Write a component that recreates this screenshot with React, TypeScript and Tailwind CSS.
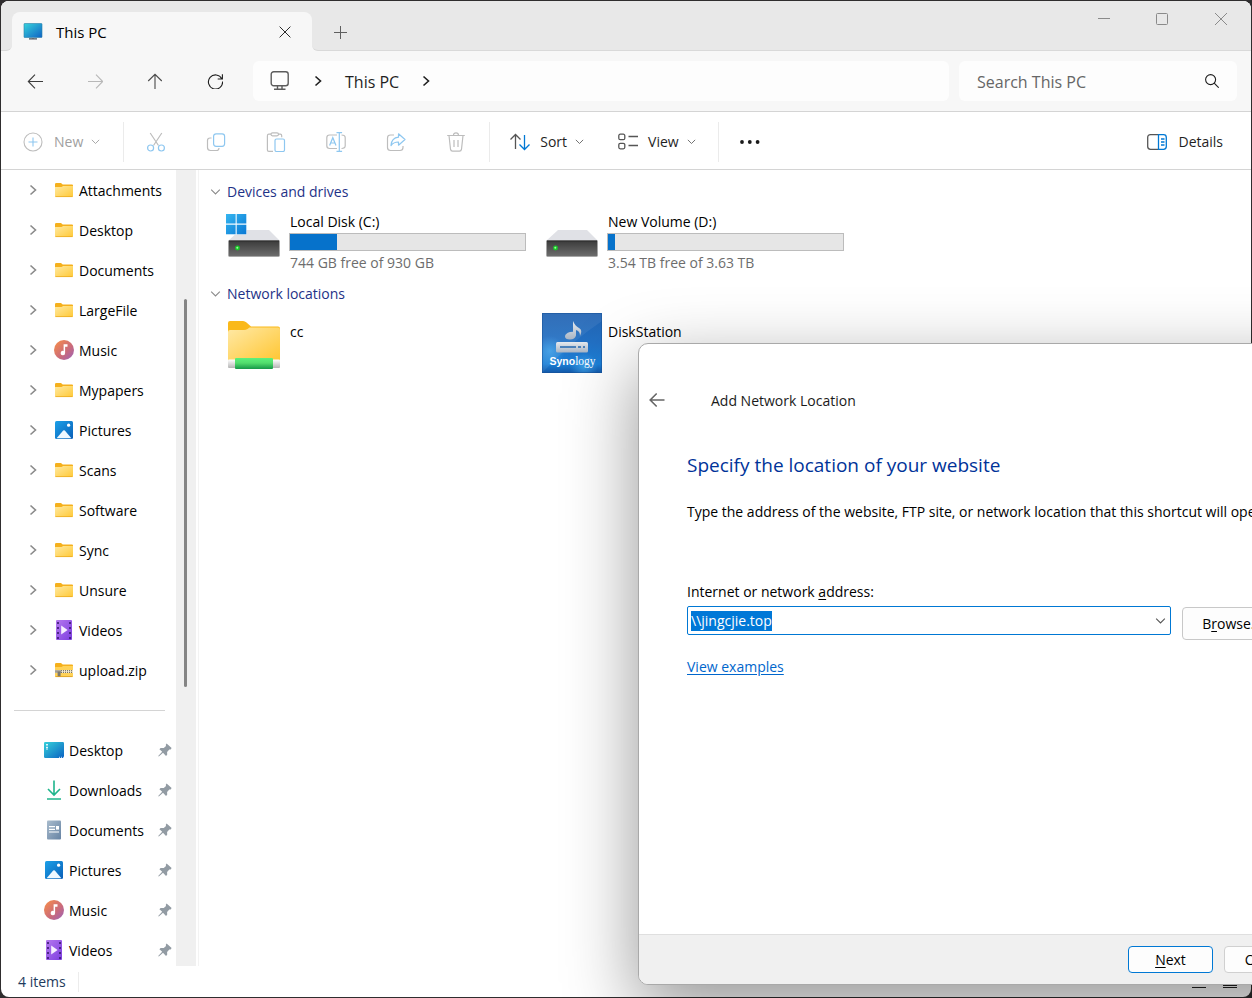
import React, { useEffect, useRef } from "react";

const ChevronDown = ({ className = "" }: { className?: string }) => (
  <svg className={className} viewBox="0 0 12 12" fill="none" stroke="currentColor">
    <path d="M2 4.2l4 4 4-4" />
  </svg>
);

const ChevronRight = ({ className = "" }: { className?: string }) => (
  <svg className={className} viewBox="0 0 16 16" fill="none" stroke="currentColor" strokeWidth="1.6">
    <path d="M5.5 3.5L10.5 8l-5 4.5" />
  </svg>
);

const Monitor = () => (
  <svg className="size-5" viewBox="0 0 20 20">
    <defs>
      <linearGradient id="monitor" x1="0" y1="0" x2="1" y2="1">
        <stop offset="0" stopColor="#36d3dc" />
        <stop offset="1" stopColor="#0f62c4" />
      </linearGradient>
    </defs>
    <rect x="1" y="1.5" width="18" height="14" rx="0.6" fill="url(#monitor)" stroke="#2a7fa8" strokeWidth="0.6" />
    <path d="M9 15.8h2v1H9z" fill="#8f9aa5" />
    <path d="M6 16.800h8" stroke="#4a535c" strokeWidth="1.2" />
  </svg>
);

const Folder = () => (
  <svg className="size-5" viewBox="0 0 20 20">
    <defs>
      <linearGradient id="folder" x1="0" y1="0" x2="1" y2="1">
        <stop offset="0" stopColor="#ffe9a0" />
        <stop offset="1" stopColor="#ffc937" />
      </linearGradient>
    </defs>
    <path d="M1 4.2Q1 3 2.2 3H7l1.7 1.6H18q1 0 1 1V9H1z" fill="#f5b01c" />
    <path d="M1 7h6.5l1.6-1H19v10q0 1-1 1H2q-1 0-1-1z" fill="url(#folder)" />
    <path d="M1.4 16.6h17.2" stroke="#eba91f" strokeWidth="0.8" />
  </svg>
);

const Zip = () => (
  <svg className="size-5" viewBox="0 0 20 20">
    <path d="M1 4.2Q1 3 2.2 3H7l1.7 1.6H18q1 0 1 1V9H1z" fill="#f5b01c" />
    <path d="M1 7h6.5l1.6-1H19v10q0 1-1 1H2q-1 0-1-1z" fill="#ffd257" />
    <path d="M1 10h18v3H1z" fill="#f0e6cc" />
    <path d="M7 10.7h12M7 12.4h12" stroke="#6b6658" strokeDasharray="1 1" />
    <path d="M1 10.2h6v2.6H1z" fill="#a49e91" />
    <path d="M3.6 11.5h3v5.2h-3z" fill="#7d7970" />
    <path d="M1.4 16.6h17.2" stroke="#d99a1a" strokeWidth="0.8" />
  </svg>
);

const Music = () => (
  <svg className="size-5" viewBox="0 0 20 20">
    <defs>
      <linearGradient id="music" x1="0" y1="0" x2="1" y2="1">
        <stop offset="0.1" stopColor="#f2894f" />
        <stop offset="0.6" stopColor="#c96a7c" />
        <stop offset="1" stopColor="#9a62bd" />
      </linearGradient>
    </defs>
    <circle cx="10" cy="10" r="10" fill="url(#music)" />
    <path d="M9.6 4.3h3.9v2.5h-2.4v6.1a2.2 2.2 0 1 1-1.5-2z" fill="#fff" />
  </svg>
);

const Pictures = () => (
  <svg className="size-5" viewBox="0 0 20 20">
    <defs>
      <linearGradient id="pictures" x1="0" y1="0" x2="1" y2="1">
        <stop offset="0" stopColor="#1ba0e8" />
        <stop offset="1" stopColor="#0a5fb8" />
      </linearGradient>
    </defs>
    <rect x="1" y="1" width="18" height="18" rx="1.5" fill="url(#pictures)" />
    <path d="M2.6 18.2l6.6-7.6q.8-.8 1.6 0l6.6 7.6z" fill="#eef7ff" />
    <circle cx="14.6" cy="5.2" r="1.6" fill="#fff" />
  </svg>
);

const Videos = () => (
  <svg className="size-5" viewBox="0 0 20 20">
    <defs>
      <linearGradient id="videos" x1="0" y1="0" x2="1" y2="1">
        <stop offset="0" stopColor="#b578ee" />
        <stop offset="1" stopColor="#7d3ee0" />
      </linearGradient>
    </defs>
    <rect x="2" y="0" width="16" height="20" rx="1" fill="url(#videos)" />
    <path d="M4 2v17M16 2v17" stroke="#43207c" strokeWidth="1.8" strokeDasharray="2 3" />
    <path d="M7.2 5.6l6.4 4.4-6.4 4.4z" fill="#f6eeff" />
  </svg>
);

const DesktopIcon = () => (
  <svg className="size-5" viewBox="0 0 20 20">
    <defs>
      <linearGradient id="desktop" x1="0" y1="0" x2="1" y2="1">
        <stop offset="0" stopColor="#35d0da" />
        <stop offset="1" stopColor="#0a62c2" />
      </linearGradient>
    </defs>
    <rect x="0" y="2" width="20" height="16" rx="1.2" fill="url(#desktop)" />
    <path d="M3 4v6" stroke="#fff" strokeWidth="1.7" strokeDasharray="1.6 1.2" />
    <path d="M15 17.3h5" stroke="#d9ecff" strokeWidth="1" strokeDasharray="1 1" />
  </svg>
);

const Downloads = () => (
  <svg className="size-5" viewBox="0 0 20 20" fill="none" stroke="#1fb58c" strokeWidth="1.6">
    <path d="M10 .5v14M4 9l6 6 6-6M3 19h14" />
  </svg>
);

const Documents = () => (
  <svg className="size-5" viewBox="0 0 20 20">
    <defs>
      <linearGradient id="documents" x1="0" y1="0" x2="1" y2="1">
        <stop offset="0" stopColor="#a9bccd" />
        <stop offset="1" stopColor="#6683a3" />
      </linearGradient>
    </defs>
    <rect x="3" y="0.5" width="14" height="19" rx="1" fill="url(#documents)" />
    <path d="M5 6.7h6M5 9.3h6M5 12h10" stroke="#fff" strokeWidth="1.2" />
    <path d="M12 6h3v3.6h-3z" fill="#fff" />
  </svg>
);

const Pin = () => (
  <svg className="size-4 text-[#929ba3]" viewBox="0 0 16 16" fill="currentColor">
    <path d="M9.6 1.600l5 4.400-.9 1.400-1.400.1-2.200 2.400.1 2.900-1.200 1.200-3-3.200-4.200 3.800-.6-.6 4-4.200L2.400 7.200l1.200-1.300 3.200.1 2.200-2-.2-1.300z" />
  </svg>
);

const DriveShape = () => (
  <>
    <defs>
      <linearGradient id="drive" x1="0" y1="0" x2="0" y2="1">
        <stop offset="0" stopColor="#3a3a3a" />
        <stop offset="1" stopColor="#6e6e6e" />
      </linearGradient>
    </defs>
    <path d="M4 30l12-11h29l11 11z" fill="#e0e1e6" />
    <rect x="4.5" y="29.5" width="51" height="16" rx="1" fill="url(#drive)" stroke="#a5a5a5" strokeWidth="0.9" />
    <path d="M5 30h50" stroke="#2c2c2c" />
    <circle cx="13.5" cy="37" r="2.4" fill="#18c828" />
    <circle cx="13.3" cy="36.7" r="1" fill="#9dff9a" />
  </>
);

const LocalDisk = () => (
  <svg className="size-[60px] shrink-0" viewBox="0 0 60 60">
    <DriveShape />
    <defs>
      <linearGradient id="win" x1="0" y1="0" x2="1" y2="1">
        <stop offset="0" stopColor="#35b6f0" />
        <stop offset="1" stopColor="#0a78d4" />
      </linearGradient>
    </defs>
    <path d="M2 3h20.500v20.500H2z" fill="#f4fbff" />
    <path d="M2 3h9.600v9.600H2zM12.700 3h9.600v9.600h-9.600zM2 13.700h9.600v9.600H2zM12.700 13.700h9.600v9.600h-9.600z" fill="url(#win)" />
  </svg>
);

const Drive = () => (
  <svg className="size-[60px] shrink-0" viewBox="0 0 60 60">
    <DriveShape />
  </svg>
);

const NetworkFolder = () => (
  <svg className="size-[60px] shrink-0" viewBox="0 0 60 60">
    <defs>
      <linearGradient id="netfolder" x1="0" y1="0" x2="1" y2="1">
        <stop offset="0" stopColor="#ffe9a6" />
        <stop offset="1" stopColor="#ffc632" />
      </linearGradient>
      <linearGradient id="pipe" x1="0" y1="0" x2="0" y2="1">
        <stop offset="0" stopColor="#5cf07c" />
        <stop offset="0.45" stopColor="#52dd6d" />
        <stop offset="1" stopColor="#159848" />
      </linearGradient>
      <linearGradient id="pipeEnd" x1="0" y1="0" x2="0" y2="1">
        <stop offset="0" stopColor="#ffffff" />
        <stop offset="1" stopColor="#b5b5b5" />
      </linearGradient>
    </defs>
    <path d="M4 10q0-2 2-2h13q2 0 3.500 1.500L27 13.500h27q2 0 2 2V24H4z" fill="#fab91a" />
    <path d="M4 19q0-2 2-2h14q2 0 3.500-1l2-1.500H54q2 0 2 2V48H4z" fill="url(#netfolder)" />
    <rect x="4" y="46.500" width="52" height="8.500" rx="1" fill="url(#pipeEnd)" />
    <rect x="11" y="45" width="38" height="11" rx="1" fill="url(#pipe)" />
  </svg>
);

const Synology = () => (
  <svg className="size-[60px] shrink-0" viewBox="0 0 60 60">
    <defs>
      <linearGradient id="syno" x1="0" y1="0" x2="0" y2="1">
        <stop offset="0" stopColor="#2364b2" />
        <stop offset="0.5" stopColor="#2270c4" />
        <stop offset="0.85" stopColor="#1b7fd6" />
        <stop offset="1" stopColor="#1458a8" />
      </linearGradient>
      <radialGradient id="synoGlow">
        <stop offset="0" stopColor="#4bb4f5" stopOpacity="0.6" />
        <stop offset="1" stopColor="#4bb4f5" stopOpacity="0" />
      </radialGradient>
      <linearGradient id="silver" x1="0" y1="0" x2="0" y2="1">
        <stop offset="0" stopColor="#e6eaef" />
        <stop offset="1" stopColor="#a9b5c4" />
      </linearGradient>
    </defs>
    <rect width="60" height="60" fill="url(#syno)" />
    <circle cx="8" cy="38" r="15" fill="url(#synoGlow)" />
    <circle cx="42" cy="54" r="14" fill="url(#synoGlow)" />
    <path d="M60 0v8Q30 28 0 60V0z" fill="#fff" opacity="0.07" />
    <path d="M31 8q2 5 6 7t1 8q0-5-4-6v5.500q-1 4-6 4t-5-3 5-4.500l3-.3z" fill="url(#silver)" />
    <rect x="14" y="29" width="32" height="10.500" rx="1.500" fill="url(#silver)" />
    <path d="M18 34h16M36 34h3M41 34h2" stroke="#2368b0" strokeWidth="1.600" />
    <text x="7.500" y="52" fill="#fff" fontSize="10.500" fontWeight="700" fontFamily="Liberation Sans, sans-serif">
      Syno
      <tspan fontSize="11.500" fontWeight="400" fontFamily="Liberation Serif, serif">logy</tspan>
    </text>
    <rect x="0.500" y="0.500" width="59" height="59" fill="none" stroke="#164f96" opacity="0.5" />
  </svg>
);

const folders = [
  { name: "Attachments", icon: <Folder /> },
  { name: "Desktop", icon: <Folder /> },
  { name: "Documents", icon: <Folder /> },
  { name: "LargeFile", icon: <Folder /> },
  { name: "Music", icon: <Music /> },
  { name: "Mypapers", icon: <Folder /> },
  { name: "Pictures", icon: <Pictures /> },
  { name: "Scans", icon: <Folder /> },
  { name: "Software", icon: <Folder /> },
  { name: "Sync", icon: <Folder /> },
  { name: "Unsure", icon: <Folder /> },
  { name: "Videos", icon: <Videos /> },
  { name: "upload.zip", icon: <Zip /> },
];

const pinned = [
  { name: "Desktop", icon: <DesktopIcon /> },
  { name: "Downloads", icon: <Downloads /> },
  { name: "Documents", icon: <Documents /> },
  { name: "Pictures", icon: <Pictures /> },
  { name: "Music", icon: <Music /> },
  { name: "Videos", icon: <Videos /> },
];

const drives = [
  { name: "Local Disk (C:)", free: "744 GB free of 930 GB", used: 20, icon: <LocalDisk /> },
  { name: "New Volume (D:)", free: "3.54 TB free of 3.63 TB", used: 3, icon: <Drive /> },
];

const locations = [
  { name: "cc", icon: <NetworkFolder /> },
  { name: "DiskStation", icon: <Synology /> },
];

function TitleBar() {
  return (
    <div className="flex h-[50px] shrink-0 bg-[#f7f7f7]">
      <div className="w-[11px] rounded-br-md border-b border-[#d9d9d9] bg-[#e8e8e8]" />
      <div className="flex w-[300px] items-end bg-[#e8e8e8]">
        <div className="flex h-[39px] w-full items-center rounded-t-lg bg-[#f7f7f7] pr-4 pl-[11px]">
          <Monitor />
          <span className="ml-[13px] flex-1 text-[15px] font-medium">This PC</span>
          <button aria-label="Close tab" className="flex size-[22px] items-center justify-center">
            <svg className="size-3" viewBox="0 0 12 12" stroke="#2b2b2b" strokeWidth="1">
              <path d="M.6.6l10.800 10.800M11.400.6L.6 11.400" />
            </svg>
          </button>
        </div>
      </div>
      <div className="flex flex-1 justify-between rounded-bl-md border-b border-[#d9d9d9] bg-[#e8e8e8] text-[#8a8a8a]">
        <button aria-label="New tab" className="mt-5 ml-[17px] flex size-[22px] items-center justify-center">
          <svg className="size-[14px] text-[#5f5f5f]" viewBox="0 0 14 14" stroke="currentColor">
            <path d="M7.500 1v13M1 7.500h13" />
          </svg>
        </button>
        <div className="flex h-9">
          <button aria-label="Minimize" className="flex w-[58px] items-center justify-center">
            <svg className="size-3" viewBox="0 0 12 12" stroke="currentColor">
              <path d="M0 5.500h12" />
            </svg>
          </button>
          <button aria-label="Maximize" className="flex w-[58px] items-center justify-center">
            <svg className="size-3" viewBox="0 0 12 12" fill="none" stroke="currentColor">
              <rect x="0.500" y="0.500" width="11" height="11" rx="1" />
            </svg>
          </button>
          <button aria-label="Close" className="flex w-[60px] items-center justify-center">
            <svg className="size-3" viewBox="0 0 12 12" stroke="currentColor">
              <path d="M0 0l12 12M12 0L0 12" />
            </svg>
          </button>
        </div>
      </div>
    </div>
  );
}

function NavBar() {
  return (
    <div className="flex h-[61px] shrink-0 items-center border-b border-[#d4d4d4] bg-[#f7f7f7] pr-[14px] pl-1 text-[#1f1f1f]">
      <button aria-label="Back" className="flex h-10 w-[60px] items-center justify-center">
        <svg className="size-4" viewBox="0 0 16 16" fill="none" stroke="#3c3c3c" strokeWidth="1.1">
          <path d="M16 8.500H1.500M8 1.700L1.300 8.500l6.700 6.800" />
        </svg>
      </button>
      <button aria-label="Forward" className="flex h-10 w-[60px] items-center justify-center">
        <svg className="size-4" viewBox="0 0 16 16" fill="none" stroke="#b8b8b8" strokeWidth="1.1">
          <path d="M1 8.500H15.500M9 1.700L15.700 8.500l-6.700 6.800" />
        </svg>
      </button>
      <button aria-label="Up" className="flex h-10 w-[60px] items-center justify-center">
        <svg className="size-4" viewBox="0 0 16 16" fill="none" stroke="#4a4a4a" strokeWidth="1.1">
          <path d="M8 16V1.500M1.200 8L8 1.300l6.800 6.700" />
        </svg>
      </button>
      <button aria-label="Refresh" className="flex h-10 w-[60px] items-center justify-center">
        <svg className="size-4" viewBox="0 0 16 16" fill="none" stroke="#1f1f1f" strokeWidth="1.1">
          <path d="M14.800 5.700A7.100 7.100 0 1 0 15.600 8.500M15.400 1.300v4.700h-4.700" />
        </svg>
      </button>
      <div className="ml-2 flex h-10 flex-1 items-center rounded-md bg-[#fdfdfd] text-base">
        <svg className="ml-[17px] size-5" viewBox="0 0 20 20" fill="none" stroke="#5c5c5c" strokeWidth="1.4">
          <rect x="1.200" y="0.700" width="17" height="14" rx="2.500" />
          <path d="M7.500 15v3M12 15v3M4 18.200h11.500" />
        </svg>
        <ChevronRight className="mr-[19px] ml-5 size-4" />
        <button className="pt-[2px]">This PC</button>
        <ChevronRight className="ml-[19px] size-4" />
      </div>
      <div className="ml-[10px] flex h-10 w-[278px] items-center rounded-md bg-[#fdfdfd] pr-[18px] pl-[18px]">
        <input aria-label="Search This PC" placeholder="Search This PC" className="min-w-0 flex-1 pt-[2px] text-base outline-none placeholder:text-[#666]" />
        <svg className="size-[14px]" viewBox="0 0 14 14" fill="none" stroke="#1f1f1f" strokeWidth="1.1">
          <circle cx="5.600" cy="5.600" r="5" />
          <path d="M9.200 9.200l4.500 4.500" />
        </svg>
      </div>
    </div>
  );
}

function Toolbar() {
  return (
    <div className="flex h-[58px] shrink-0 items-center border-b border-[#d4d4d4] bg-white pt-[2px] text-[#1f1f1f]">
      <button disabled className="flex items-center pr-[22px] pl-[22px] text-[#a0a0a0]">
        <svg className="size-5" viewBox="0 0 20 20" fill="none">
          <circle cx="10" cy="10" r="9" stroke="#bdbdbd" strokeWidth="1.1" />
          <path d="M10 5.500v9M5.500 10h9" stroke="#8ec7f0" strokeWidth="1.1" />
        </svg>
        <span className="ml-[11px]">New</span>
        <ChevronDown className="ml-[7px] size-[11px]" />
      </button>
      <div className="mr-[2px] h-10 w-px bg-[#ebebeb]" />
      <button disabled aria-label="Cut" className="flex w-[60px] justify-center">
        <svg className="size-5" viewBox="0 0 20 20" fill="none" strokeWidth="1.2">
          <path d="M4.200 1l8.300 12.500M15.800 1L7.500 13.500" stroke="#bdbdbd" />
          <circle cx="4.600" cy="16" r="3" stroke="#8ec7f0" />
          <circle cx="15.400" cy="16" r="3" stroke="#8ec7f0" />
        </svg>
      </button>
      <button disabled aria-label="Copy" className="flex w-[60px] justify-center">
        <svg className="size-5" viewBox="0 0 20 20" fill="none" strokeWidth="1.2">
          <path d="M5.500 6H4Q1.500 6 1.500 8.500v7Q1.500 18.500 4.500 18.500h6Q13 18.500 13 16" stroke="#bdbdbd" />
          <rect x="7.600" y="1.800" width="11" height="12.500" rx="2.500" stroke="#8ec7f0" />
        </svg>
      </button>
      <button disabled aria-label="Paste" className="flex w-[60px] justify-center">
        <svg className="size-5" viewBox="0 0 20 20" fill="none" strokeWidth="1.2">
          <path d="M5 2.200H2.800Q1.400 2.200 1.400 3.700v14.300Q1.400 19.400 2.800 19.400H7M12.500 2.200h1.800q1.400 0 1.400 1.500v1.500" stroke="#bdbdbd" />
          <rect x="5" y="0.800" width="7.500" height="3" rx="1.500" stroke="#bdbdbd" />
          <rect x="9" y="7" width="9.500" height="12.500" rx="1.500" stroke="#8ec7f0" />
        </svg>
      </button>
      <button disabled aria-label="Rename" className="flex w-[60px] justify-center">
        <svg className="size-5" viewBox="0 0 20 20" fill="none" strokeWidth="1.200">
          <path d="M11 3H3.500Q.8 3 .8 5.700v8.100q0 2.700 2.700 2.700H11M15.500 3q3.700 0 3.700 2.700v8.100q0 2.700-3.700 2.700" stroke="#bdbdbd" />
          <path d="M13.300.7v18.600M10.500.7h5.600M10.500 19.300h5.600M3.600 13.500L6.800 5.700 10 13.500M4.700 11h4.200" stroke="#8ec7f0" />
        </svg>
      </button>
      <button disabled aria-label="Share" className="flex w-[60px] justify-center">
        <svg className="size-5" viewBox="0 0 20 20" fill="none" strokeWidth="1.200" strokeLinejoin="round">
          <path d="M8 3H4.500Q1.500 3 1.500 6v9.500q0 3 3 3H14q3 0 3-3V14" stroke="#bdbdbd" />
          <path d="M12.500 1.800l6.500 5.700-6.500 5.700V10Q8 9.800 5 13.500 5.500 6 12.500 5.200z" stroke="#8ec7f0" />
        </svg>
      </button>
      <button disabled aria-label="Delete" className="flex w-[60px] justify-center">
        <svg className="size-5" viewBox="0 0 20 20" fill="none" stroke="#bdbdbd" strokeWidth="1.200">
          <path d="M1.200 3.500h17.600M7.500 3.200Q7.500.9 10 .9t2.500 2.300M3 3.500l1.500 13.700q.3 2 2 2h7q1.700 0 2-2L17 3.500M8 8v7M12 8v7" />
        </svg>
      </button>
      <div className="ml-[3px] h-10 w-px bg-[#ebebeb]" />
      <button className="ml-5 flex items-center">
        <svg className="size-5" viewBox="0 0 20 20" fill="none" strokeWidth="1.300">
          <path d="M5.500 17V2.500M.5 7.500l5-5 5 5" stroke="#555" />
          <path d="M14.500 3v14.500M9.500 12.500l5 5 5-5" stroke="#0078d4" />
        </svg>
        <span className="ml-[10px]">Sort</span>
        <ChevronDown className="ml-[7px] size-[11px] text-[#666]" />
      </button>
      <button className="ml-[33px] flex items-center">
        <svg className="size-5" viewBox="0 0 20 20" fill="none" stroke="#555" strokeWidth="1.300">
          <rect x="0.800" y="2.200" width="6" height="5.500" rx="1.500" />
          <rect x="0.800" y="11.300" width="6" height="5.500" rx="1.500" />
          <path d="M10.500 4.500H20M10.500 13.500H20" />
        </svg>
        <span className="ml-[10px]">View</span>
        <ChevronDown className="ml-[7px] size-[11px] text-[#666]" />
      </button>
      <div className="ml-[21px] h-10 w-px bg-[#ebebeb]" />
      <button aria-label="See more" className="ml-5">
        <svg className="h-5 w-[22px]" viewBox="0 0 22 20" fill="#1a1a1a">
          <circle cx="3" cy="10" r="1.900" />
          <circle cx="10.800" cy="10" r="1.900" />
          <circle cx="18.600" cy="10" r="1.900" />
        </svg>
      </button>
      <button className="mr-7 ml-auto flex items-center">
        <svg className="size-5" viewBox="0 0 20 20" fill="none" strokeWidth="1.300">
          <path d="M12 2.700H3.500Q.7 2.700.7 5.500v9q0 2.800 2.800 2.800H12" stroke="#555" />
          <path d="M11.500 2.700h5q2.800 0 2.800 2.800v9q0 2.800-2.800 2.800h-5z" stroke="#0078d4" />
          <path d="M14 7h3.500M14 10h3.500M14 13h3.500" stroke="#0078d4" />
        </svg>
        <span className="ml-[11px]">Details</span>
      </button>
    </div>
  );
}

function Sidebar() {
  return (
    <nav className="flex w-[198px] shrink-0 overflow-hidden border-r border-[#f3f3f3]">
      <div className="w-[175px]">
        <ul>
          {folders.map((item) => (
            <li key={item.name} className="flex h-10 items-center pl-6">
              <button aria-label={`Expand ${item.name}`}>
                <ChevronRight className="size-4 text-[#8a8a8a]" />
              </button>
              <a href="#" className="ml-[13px] flex items-center gap-[5px]">
                {item.icon}
                <span className="pt-[2px]">{item.name}</span>
              </a>
            </li>
          ))}
        </ul>
        <hr className="my-5 mr-[11px] ml-[13px] border-[#d4d4d4]" />
        <ul className="-mt-px">
          {pinned.map((item) => (
            <li key={item.name} className="flex h-10 items-center justify-between pr-[3px] pl-[43px]">
              <a href="#" className="flex items-center gap-[5px]">
                {item.icon}
                <span className="pt-[2px]">{item.name}</span>
              </a>
              <Pin />
            </li>
          ))}
        </ul>
      </div>
      <div className="flex w-5 justify-center bg-[#f0f0f0] pt-[129px] pr-px">
        <div className="h-[388px] w-[3px] rounded-full bg-[#858585]" />
      </div>
    </nav>
  );
}

function GroupTitle({ children }: { children: React.ReactNode }) {
  return (
    <h2 className="flex h-[41px] items-center gap-[5px] pt-[2px] pl-[10px] text-[#1e3287]">
      <ChevronDown className="size-[13px] text-[#8a8a8a]" />
      {children}
    </h2>
  );
}

function Content() {
  return (
    <main className="flex flex-1 flex-col gap-px">
      <section>
        <GroupTitle>Devices and drives</GroupTitle>
        <div className="flex pl-[25px]">
          {drives.map((drive) => (
            <div key={drive.name} className="flex h-[60px] w-[318px] gap-[5px]">
              {drive.icon}
              <div className="w-[237px] pt-px">
                <p className="pl-px">{drive.name}</p>
                <div className="mt-px h-[18px] border border-[#bcbcbc] bg-[#e6e6e6]">
                  <div className="h-full bg-[#0672cb]" style={{ width: `${drive.used}%` }} />
                </div>
                <p className="mt-[2px] pl-px text-[#6d6d6d]">{drive.free}</p>
              </div>
            </div>
          ))}
        </div>
      </section>
      <section>
        <GroupTitle>Network locations</GroupTitle>
        <div className="flex pl-[25px]">
          {locations.map((location) => (
            <div key={location.name} className="flex w-[318px] gap-[6px]">
              {location.icon}
              <p className="pt-[9px]">{location.name}</p>
            </div>
          ))}
        </div>
      </section>
    </main>
  );
}

function StatusBar() {
  return (
    <footer className="flex h-[31px] shrink-0 items-center pr-[14px] pl-[17px] text-[#1e3a5c]">
      <span className="border-r border-[#ececec] pr-3">4 items</span>
      <div className="ml-auto flex gap-[17px]">
        <button aria-label="Details view">
          <svg className="h-[15px] w-[14px]" viewBox="0 0 14 15" stroke="#222">
            <path d="M0 1.500h14M0 5.500h14M0 9.500h14M0 13.500h14" />
          </svg>
        </button>
        <button aria-label="Large icons view">
          <svg className="h-[15px] w-[14px]" viewBox="0 0 14 15" fill="none" stroke="#222">
            <path d="M.5 1.500h13v10H.5zM0 11.500h14M0 13.500h14" />
          </svg>
        </button>
      </div>
    </footer>
  );
}

function NetworkDialog() {
  const address = useRef<HTMLInputElement>(null);

  useEffect(() => {
    address.current?.focus();
    address.current?.select();
  }, []);

  return (
    <div
      role="dialog"
      aria-label="Add Network Location"
      className="absolute top-[343px] left-[638px] flex h-[642px] w-[780px] flex-col overflow-hidden rounded-[10px] border border-[#a9a9a9] bg-white text-black shadow-[0_24px_72px_rgba(0,0,0,0.42)]"
    >
      <div className="flex-1 pt-11">
        <div className="flex h-6 items-center pl-[10px] text-[#1a1a1a]">
          <button aria-label="Back">
            <svg className="size-4" viewBox="0 0 16 16" fill="none" stroke="#666" strokeWidth="1.600">
              <path d="M15.500 8H1.200M7.700 1.500L1.200 8l6.500 6.500" />
            </svg>
          </button>
          <span className="ml-[46px] pt-[2px]">Add Network Location</span>
        </div>
        <div className="px-12">
          <h1 className="mt-10 text-[19px] leading-[26px] text-[#003399]">Specify the location of your website</h1>
          <p className="mt-6 whitespace-nowrap">
            Type the address of the website, FTP site, or network location that this shortcut will open:
          </p>
          <label htmlFor="address" className="mt-15 block">
            Internet or network <u className="underline-offset-2">a</u>ddress:
          </label>
          <div className="mt-1 flex items-start gap-[11px]">
            <div className="flex h-[29px] w-[484px] items-center rounded-[2px] border border-[#0078d4] pr-[3px] pl-[3px]">
              <input
                id="address"
                ref={address}
                defaultValue="\\jingcjie.top"
                className="h-5 min-w-0 flex-1 outline-none selection:bg-[#0078d7] selection:text-white"
              />
              <button aria-label="Show addresses">
                <ChevronDown className="size-[13px] text-[#555]" />
              </button>
            </div>
            <button className="mt-px h-[33px] w-[100px] rounded-[4px] border border-[#c8c8c8] bg-[#fdfdfd]">
              B<u className="underline-offset-2">r</u>owse...
            </button>
          </div>
          <a href="#" className="mt-[17px] inline-block text-[#0066cc] underline underline-offset-2">
            View examples
          </a>
        </div>
      </div>
      <div className="flex h-[50px] items-center gap-[11px] border-t border-[#dfdfdf] bg-[#f0f0f0] pl-[489px]">
        <button className="h-[27px] w-[85px] rounded-[4px] border border-[#0078d4] bg-[#fdfdfd]">
          <u className="underline-offset-2">N</u>ext
        </button>
        <button className="h-[27px] w-[85px] rounded-[4px] border border-[#d0d0d0] bg-[#fdfdfd]">Cancel</button>
      </div>
    </div>
  );
}

export default function App() {
  return (
    <div className="relative h-screen overflow-hidden bg-[#2f2d2e] p-px font-['Open_Sans','Noto_Sans',sans-serif] text-sm leading-5 text-black">
      <div className="flex h-full flex-col overflow-hidden rounded-lg bg-white">
        <TitleBar />
        <NavBar />
        <Toolbar />
        <div className="flex min-h-0 flex-1">
          <Sidebar />
          <Content />
        </div>
        <StatusBar />
      </div>
      <NetworkDialog />
    </div>
  );
}
